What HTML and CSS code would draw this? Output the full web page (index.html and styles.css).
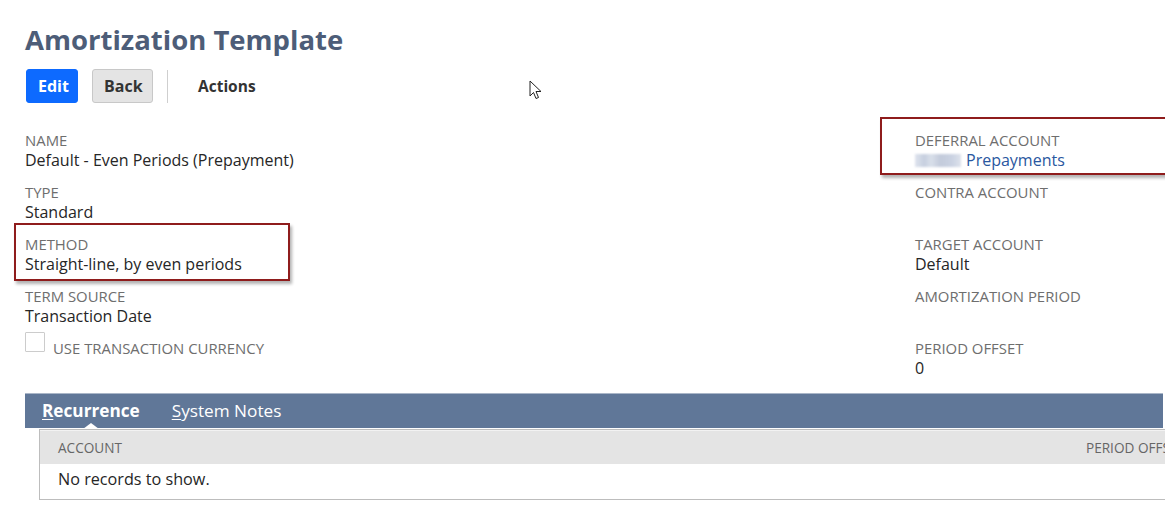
FILE: index.html
```html
<!DOCTYPE html>
<html>
<head>
<meta charset="utf-8">
<link rel="stylesheet" href="styles.css">
</head>
<body>
<div class="page">
  <h1 class="title">Amortization Template</h1>
  <div class="toolbar">
    <button class="btn btn-primary">Edit</button>
    <button class="btn btn-secondary">Back</button>
    <span class="sep"></span>
    <span class="actions">Actions</span>
  </div>

  <div class="fields">
    <div class="col">
      <div class="field">
        <div class="label">NAME</div>
        <div class="value">Default - Even Periods (Prepayment)</div>
      </div>
      <div class="field">
        <div class="label">TYPE</div>
        <div class="value">Standard</div>
      </div>
      <div class="field hl hl-method">
        <div class="label">METHOD</div>
        <div class="value">Straight-line, by even periods</div>
      </div>
      <div class="field">
        <div class="label">TERM SOURCE</div>
        <div class="value">Transaction Date</div>
      </div>
      <div class="check-row">
        <span class="checkbox"></span>
        <span class="label">USE TRANSACTION CURRENCY</span>
      </div>
    </div>
    <div class="col">
      <div class="field hl hl-deferral">
        <div class="label">DEFERRAL ACCOUNT</div>
        <div class="value"><span class="blurred"></span><a class="link">Prepayments</a></div>
      </div>
      <div class="field">
        <div class="label">CONTRA ACCOUNT</div>
        <div class="value"></div>
      </div>
      <div class="field">
        <div class="label">TARGET ACCOUNT</div>
        <div class="value">Default</div>
      </div>
      <div class="field">
        <div class="label">AMORTIZATION PERIOD</div>
        <div class="value"></div>
      </div>
      <div class="field">
        <div class="label">PERIOD OFFSET</div>
        <div class="value">0</div>
      </div>
    </div>
  </div>

  <div class="tabs">
    <span class="tab active"><u>R</u>ecurrence</span>
    <span class="tab"><u>S</u>ystem Notes</span>
  </div>
  <div class="panel">
    <div class="thead">
      <span class="th">ACCOUNT</span>
      <span class="th th-right">PERIOD OFFSET</span>
    </div>
    <div class="trow">No records to show.</div>
  </div>

  <svg class="cursor" width="13" height="20" viewBox="0 0 13 20">
    <path d="M1 1 L1 16 L4.5 12.5 L7 18.5 L9.5 17.5 L7 11.5 L12 11.5 Z" fill="#fff" stroke="#222" stroke-width="1" stroke-linejoin="miter"/>
  </svg>
</div>
</body>
</html>
```

FILE: styles.css
```css
html, body {
  margin: 0;
  padding: 0;
  overflow: hidden;
  background: #fff;
}
body {
  font-family: "Open Sans", "Liberation Sans", sans-serif;
  color: #262626;
}
.page {
  position: relative;
  width: 1240px;
  padding: 22px 0 0 25px;
  box-sizing: border-box;
}
.title {
  margin: 0;
  font-size: 27.5px;
  line-height: 36px;
  font-weight: 700;
  color: #4d5d78;
}
.toolbar {
  display: flex;
  align-items: center;
  margin-top: 11px;
  height: 34px;
}
.btn {
  font-family: "Open Sans", "Liberation Sans", sans-serif;
  font-size: 16px;
  font-weight: 700;
  height: 34px;
  border-radius: 3px;
  padding: 0 11px;
  cursor: pointer;
}
.btn-primary {
  background: #0d6aff;
  color: #fff;
  border: 1px solid #0d6aff;
  width: 52px;
  margin-left: 1px;
}
.btn-secondary {
  background: #e4e4e4;
  color: #333;
  border: 1px solid #c8c8c8;
  width: 61px;
  margin-left: 14px;
}
.sep {
  width: 1px;
  height: 33px;
  background: #cfcfcf;
  margin-left: 14px;
}
.actions {
  margin-left: 30px;
  font-size: 15.5px;
  font-weight: 700;
  color: #333;
}
.fields {
  display: grid;
  grid-template-columns: 890px 1fr;
  margin-top: 27px;
}
.field {
  position: relative;
  margin-bottom: 12px;
}
.label {
  font-size: 14.9px;
  line-height: 20px;
  color: #6e6e6e;
}
.value {
  font-size: 16px;
  line-height: 20px;
  height: 20px;
  color: #262626;
  white-space: nowrap;
}
.link {
  color: #2a57a0;
}
.blurred {
  display: inline-block;
  width: 46px;
  height: 13px;
  margin-right: 5px;
  vertical-align: -1px;
  background: linear-gradient(90deg, #dfe4ee 0%, #c6cfdf 20%, #d9dfea 35%, #c3cbdb 55%, #cad2e2 80%, #dde2ec 100%);
  filter: blur(1.2px);
}
.hl::before {
  content: "";
  position: absolute;
  border: 2px solid #8f1c1c;
  box-shadow: 2px 3px 3px rgba(0, 0, 0, 0.3);
  box-sizing: border-box;
  pointer-events: none;
}
.hl-method::before {
  left: -11px;
  top: -11px;
  width: 276px;
  height: 58px;
}
.hl-deferral::before {
  left: -35px;
  top: -13px;
  width: 320px;
  height: 58px;
}
.check-row {
  display: flex;
  align-items: flex-start;
}
.checkbox {
  width: 20px;
  height: 20px;
  box-sizing: border-box;
  border: 1px solid #cccccc;
  border-radius: 1px;
  margin-top: -6px;
  margin-right: 8px;
  background: #fff;
}
.tabs {
  margin-top: 3px;
  height: 35px;
  width: 1138px;
  background: #607798;
  border-top: 1px solid #aab6c8;
  box-sizing: border-box;
  display: flex;
  align-items: center;
  padding-left: 17px;
  gap: 32px;
}
.tab {
  position: relative;
  color: #fff;
  font-size: 17.2px;
  line-height: 20px;
}
.tab u {
  text-decoration-thickness: 1px;
  text-underline-offset: 2px;
}
.tab.active {
  font-weight: 700;
}
.tab.active::after {
  content: "";
  position: absolute;
  left: 50%;
  margin-left: -8px;
  bottom: -8px;
  width: 0;
  height: 0;
  border-left: 8px solid transparent;
  border-right: 8px solid transparent;
  border-bottom: 6px solid #fff;
}
.panel {
  margin-left: 14px;
  margin-top: 1px;
  border: 1px solid #bdbdbd;
  border-right: none;
  width: 1200px;
}
.thead {
  display: flex;
  justify-content: space-between;
  background: #e4e4e4;
  height: 33px;
  align-items: center;
  padding: 0 0 0 18px;
  border-top: 1px solid #f2f2f2;
}
.th {
  font-size: 13.6px;
  color: #666;
}
.th-right {
  width: 154px;
}
.trow {
  padding-left: 18px;
  height: 35px;
  line-height: 31px;
  font-size: 16.2px;
  color: #262626;
}
.cursor {
  position: absolute;
  left: 529px;
  top: 80px;
}
```
